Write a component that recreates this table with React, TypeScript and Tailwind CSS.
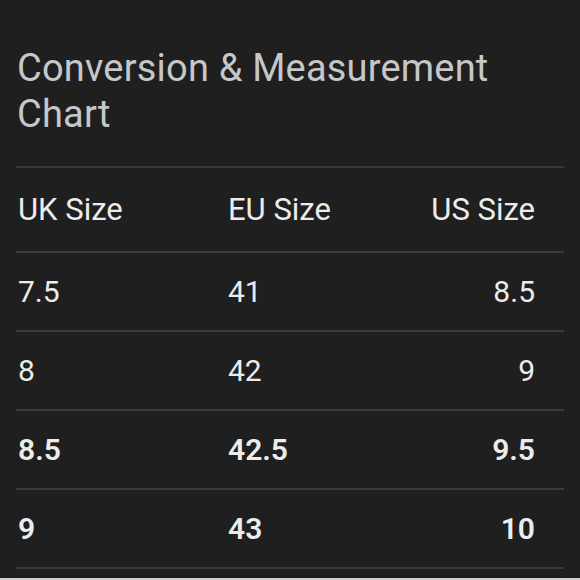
import React from "react";

const rows: { uk: string; eu: string; us: string; bold?: boolean }[] = [
  { uk: "7.5", eu: "41", us: "8.5" },
  { uk: "8", eu: "42", us: "9" },
  { uk: "8.5", eu: "42.5", us: "9.5", bold: true },
  { uk: "9", eu: "43", us: "10", bold: true },
];

export default function App() {
  return (
    <div
      className="w-[580px] h-[580px] bg-[#1f1f1f] flex flex-col overflow-hidden"
      style={{ fontFamily: "Roboto, 'Open Sans', sans-serif" }}
    >
      <div className="flex-1 pl-[16px] pr-[16px]">
        <h1 className="pt-[45px] pl-[1px] text-[38px] leading-[46px] text-[#c6c7c9] font-normal tracking-[0.2px]">
          Conversion &amp; Measurement
          <br />
          Chart
        </h1>
        <div className="mt-[29px] border-t-2 border-[#38383a]">
          <div className="grid grid-cols-[210px_1fr_auto] items-center h-[85px] pr-[29px] border-b-2 border-[#3a3a3c] text-[31px] text-[#ececec]">
            <div className="pl-[2px] pt-[2px]">UK Size</div>
            <div className="pl-[2px] pt-[2px]">EU Size</div>
            <div className="text-right pt-[2px]">US Size</div>
          </div>
          {rows.map((r) => (
            <div
              key={r.uk}
              className={`grid grid-cols-[210px_1fr_auto] items-center h-[79px] pr-[29px] border-b-2 border-[#3a3a3c] text-[30px] text-[#ececec] ${
                r.bold ? "font-semibold" : "font-normal"
              }`}
            >
              <div className="pl-[2px]">{r.uk}</div>
              <div className="pl-[2px]">{r.eu}</div>
              <div className="text-right">{r.us}</div>
            </div>
          ))}
        </div>
      </div>
      <div className="h-[2px] bg-[#cfcfcf]" />
    </div>
  );
}
